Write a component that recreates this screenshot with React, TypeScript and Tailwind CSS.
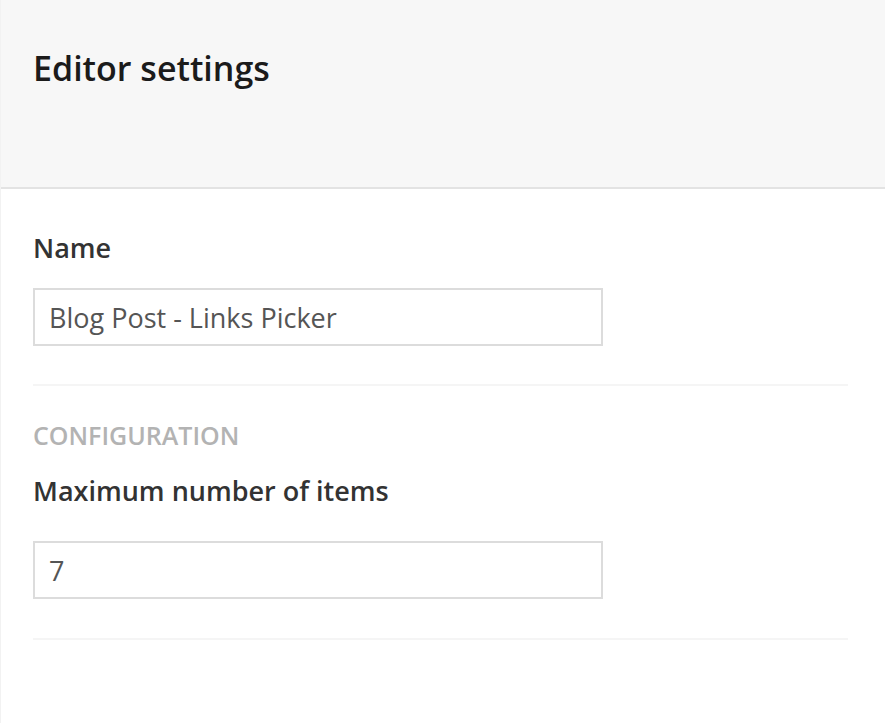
export default function App() {
  return (
    <div className="min-h-[723px] w-full bg-white font-['Open_Sans',sans-serif] border-l border-[#f2f2f2]">
      <div className="h-[189px] bg-[#f7f7f7] border-b-2 border-[#e3e3e3] pl-[32px] pr-[33px] pt-[44px]">
        <h1 className="text-[34px] font-semibold leading-[48px] text-[#1b1b1b]">Editor settings</h1>
      </div>

      <div className="pl-[32px] pr-[37px]">
        <div className="pt-[41px] pb-[38px] border-b-2 border-[#f5f5f5]">
          <label className="block text-[27px] font-semibold leading-[36px] text-[#333333]">Name</label>
          <input
            readOnly
            value="Blog Post - Links Picker"
            className="mt-[22px] block h-[58px] w-[570px] border-2 border-[#dcdcdc] px-[14px] text-[27px] text-[#555555] outline-none"
          />
        </div>

        <div className="pt-[34px] pb-[39px] border-b-2 border-[#f5f5f5]">
          <div className="text-[25px] font-semibold leading-[30px] text-[#b3b3b3]">CONFIGURATION</div>
          <label className="mt-[23px] block text-[27px] font-semibold leading-[36px] text-[#333333]">
            Maximum number of items
          </label>
          <input
            readOnly
            value="7"
            className="mt-[32px] block h-[58px] w-[570px] border-2 border-[#dcdcdc] px-[14px] text-[27px] text-[#555555] outline-none"
          />
        </div>
      </div>
    </div>
  )
}
